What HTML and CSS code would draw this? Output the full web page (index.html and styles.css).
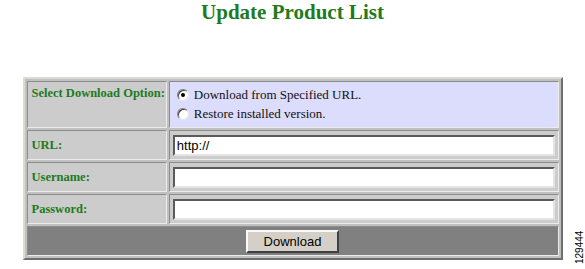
FILE: index.html
```html
<!DOCTYPE html>
<html lang="en">
<head>
    <meta charset="UTF-8">
    <title>Update Product List</title>
    <link rel="stylesheet" href="styles.css">
</head>
<body>

    <h1 class="title">Update Product List</h1>

    <table class="form-table">
        <tr class="option-row">
            <td class="label label-top">Select Download Option:</td>
            <td class="value">
                <label class="radio-line"><input type="radio" name="src" checked> Download from Specified URL.</label>
                <label class="radio-line"><input type="radio" name="src"> Restore installed version.</label>
            </td>
        </tr>
        <tr class="field-row">
            <td class="label">URL:</td>
            <td class="value"><input class="text-input" type="text" value="http://"></td>
        </tr>
        <tr class="field-row">
            <td class="label">Username:</td>
            <td class="value"><input class="text-input" type="text"></td>
        </tr>
        <tr class="field-row">
            <td class="label">Password:</td>
            <td class="value"><input class="text-input" type="password"></td>
        </tr>
        <tr class="button-row">
            <td colspan="2"><button class="btn" type="button">Download</button></td>
        </tr>
    </table>

    <span class="fig-id">129444</span>

</body>
</html>
```

FILE: styles.css
```css
* {
    box-sizing: border-box;
}

body {
    margin: 0;
    position: relative;
    width: 585px;
    height: 269px;
    background: #fff;
    font-family: "Liberation Serif", "Times New Roman", serif;
}

.title {
    margin: 0;
    padding-top: 0;
    height: 77px;
    text-align: center;
    font-size: 21px;
    font-weight: bold;
    color: #1e7b1e;
}

.form-table {
    width: 540px;
    margin: 0 auto;
    border: 2px solid;
    border-color: #dcdad4 #6e6e6e #6e6e6e #dcdad4;
    border-spacing: 2px;
    background: #c0c0c0;
}

.form-table td {
    border: 1px solid;
    border-color: #8c8c8c #ececec #ececec #8c8c8c;
    padding: 0 4px;
}

.form-table .label {
    width: 140px;
    padding: 0 1px 0 4px;
    white-space: nowrap;
    font-size: 12.5px;
    font-weight: bold;
    color: #1e7b1e;
    background: #cccccc;
}

.form-table .label-top {
    vertical-align: top;
    padding-top: 4px;
}

.option-row td {
    background: #dcdcfc;
    height: 47px;
}

.option-row .value {
    padding: 3px 7px;
}

.radio-line {
    display: flex;
    align-items: center;
    gap: 5px;
    height: 19px;
    font-size: 13px;
    color: #111;
}

.radio-line input {
    appearance: none;
    margin: 0;
    width: 12px;
    height: 12px;
    border-radius: 50%;
    border: 1px solid;
    border-color: #808080 #e8e8e8 #e8e8e8 #808080;
    background: #fff;
    box-shadow: inset 1px 1px 0 #404040;
    position: relative;
}

.radio-line input:checked::after {
    content: "";
    position: absolute;
    left: 3px;
    top: 3px;
    width: 4px;
    height: 4px;
    border-radius: 50%;
    background: #000;
}

.field-row td {
    height: 30px;
    background: #cccccc;
}

.field-row .value {
    padding: 0 3px;
}

.text-input {
    display: block;
    width: 100%;
    height: 21px;
    margin: 0;
    padding: 1px 2px;
    border: 2px solid;
    border-color: #5a5a5a #e4e4e4 #e4e4e4 #5a5a5a;
    background: #fff;
    font-family: "Liberation Sans", Arial, sans-serif;
    font-size: 13px;
    color: #000;
}

.button-row td {
    height: 30px;
    background: #808080;
    text-align: center;
}

.btn {
    height: 23px;
    padding: 0 16px;
    border: 2px solid;
    border-color: #fafafa #404040 #404040 #fafafa;
    background: #d4d0c8;
    font-family: "Liberation Sans", Arial, sans-serif;
    font-size: 13px;
    color: #000;
}

.fig-id {
    position: absolute;
    left: 574px;
    top: 264px;
    transform: rotate(-90deg);
    transform-origin: left top;
    font-family: "Liberation Sans", Arial, sans-serif;
    font-size: 10px;
    color: #000;
}
```
